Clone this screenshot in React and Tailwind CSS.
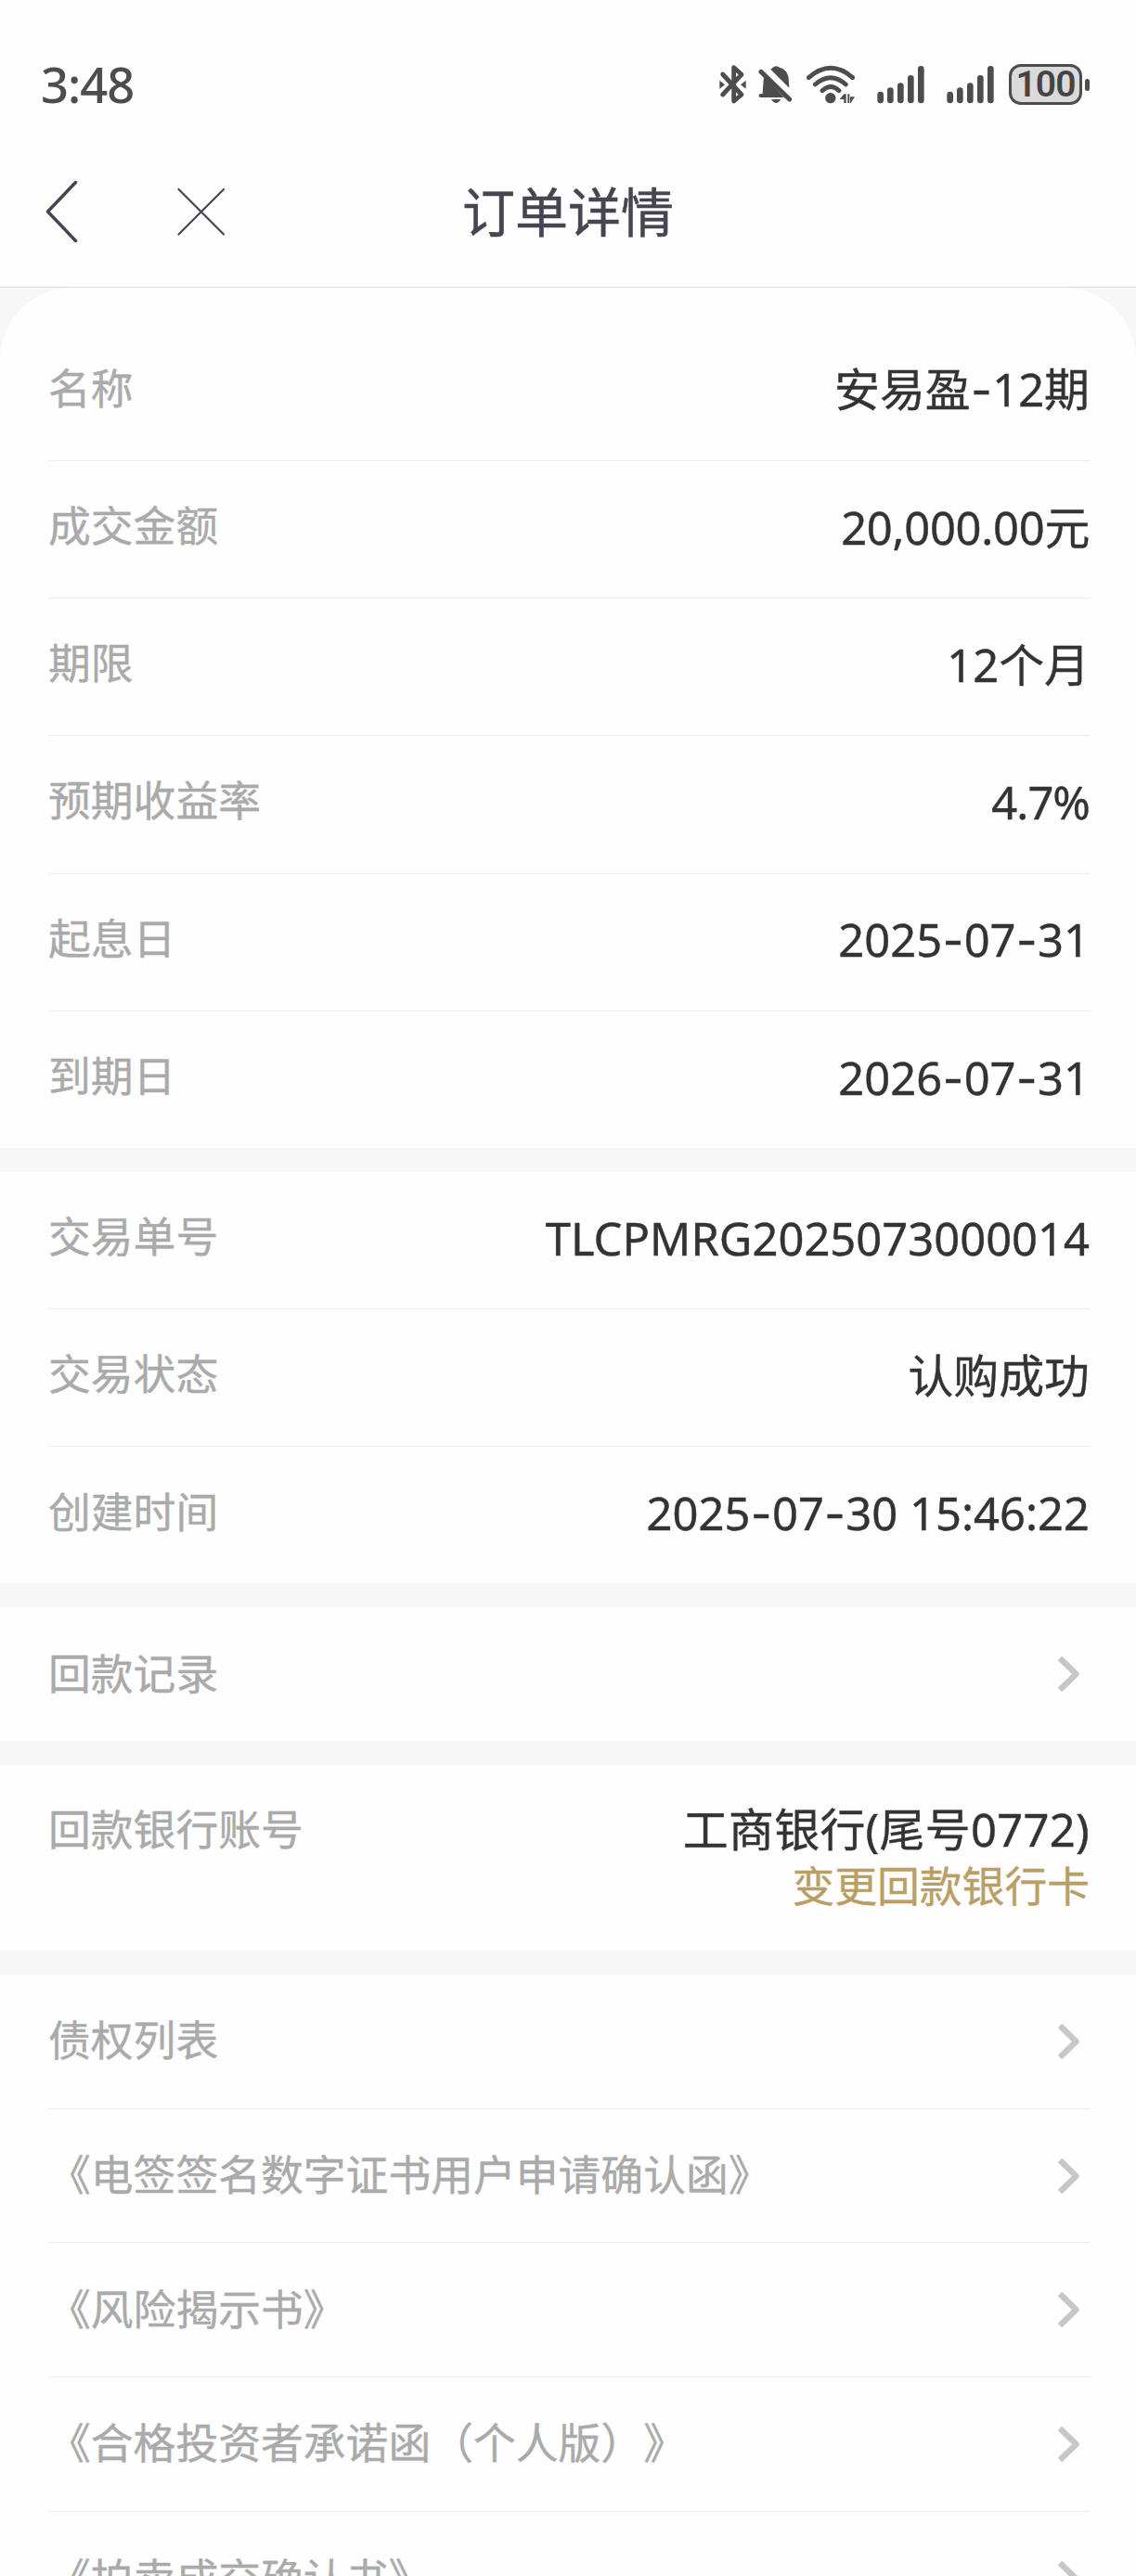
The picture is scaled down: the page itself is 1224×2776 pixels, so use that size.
import React from 'react';

const orderInfo = [
    { label: '名称', value: '安易盈-12期' },
    { label: '成交金额', value: '20,000.00元', tracking: 'tracking-[-0.3px]' },
    { label: '期限', value: '12个月' },
    { label: '预期收益率', value: '4.7%', tracking: 'tracking-[-1px]' },
    { label: '起息日', value: '2025-07-31' },
    { label: '到期日', value: '2026-07-31' },
];

const tradeInfo = [
    { label: '交易单号', value: 'TLCPMRG2025073000014' },
    { label: '交易状态', value: '认购成功' },
    { label: '创建时间', value: '2025-07-30 15:46:22' },
];

const documents = [
    '债权列表',
    '《电签签名数字证书用户申请确认函》',
    '《风险揭示书》',
    '《合格投资者承诺函（个人版）》',
    '《拍卖成交确认书》',
];

const SignalIcon = () => (
    <svg viewBox="0 57 153 132" className="h-11 w-[51px]" stroke="#4d4d4d" strokeWidth="20" strokeLinecap="round">
        <path d="M11 156v18M43 143v31M76 128v46M109 103v71M142 73v101" />
    </svg>
);

const StatusBar = () => (
    <div className="flex h-[140px] items-start justify-between pt-[70px] pr-[50px] pl-[44px] text-[#4d4d4d]">
        <span className="text-[52.500px] leading-[42px] font-medium tracking-[-1px]">3:48</span>
        <div className="-mt-px flex items-center">
            {/* bluetooth */}
            <svg viewBox="104 57 87 132" className="h-11 w-[29px]" fill="none" stroke="#4d4d4d" strokeWidth="14.500" strokeLinecap="round" strokeLinejoin="round">
                <path d="M115 90l61 66-25 21V68l25 23-61 65" />
                <path d="M105 110v27l17-13.500zM190 110v27l-17-13.500z" fill="#4d4d4d" stroke="none" />
            </svg>
            {/* muted bell */}
            <svg viewBox="230 57 111 132" className="ml-[13px] h-11 w-[37px]" fill="#4d4d4d">
                <path d="M248 95l65 70H237q-6-1-5-8 1-4 12-4zM270 74l7-6q11-9 22 0c20 6 28 20 29 36l2 30zM272 171h31q-15 24-31 0z" />
                <path d="M239 82l92 89" stroke="#4d4d4d" strokeWidth="15" strokeLinecap="round" />
            </svg>
            {/* wifi */}
            <svg viewBox="387 57 156 132" className="ml-[15px] h-11 w-[52px]" fill="none" stroke="#4d4d4d" strokeWidth="14.500" strokeLinecap="round">
                <path d="M394 101q71-62 142 0M415 123q50-44 99 0M438 143q27-25 54 0" />
                <circle cx="464.500" cy="167" r="17" fill="#4d4d4d" stroke="none" />
                <path d="M494 171l14-17v17zM508 154h7v29h-7zM520 154h6v29h-6zM528 163h15l-13 20h-2z" fill="#4d4d4d" stroke="none" />
            </svg>
            <div className="ml-6 flex gap-6">
                <SignalIcon />
                <SignalIcon />
            </div>
            {/* battery */}
            <div className="ml-4 flex items-center gap-[3px]">
                <div className="flex h-11 w-[79px] items-center justify-center rounded-[13px] border-[3px] border-[#4d4d4d] bg-[#dadada] pt-px font-['Roboto'] text-[39px] leading-none font-semibold tracking-[-1px] text-[#444]">
                    100
                </div>
                <div className="h-[13px] w-[5px] rounded-full bg-[#4d4d4d]"></div>
            </div>
        </div>
    </div>
);

const NavBar = () => (
    <div className="relative flex h-[170px] items-center justify-center border-b border-[#dedede] pt-[7px] text-[#464552]">
        <div className="absolute top-[54px] left-[48px] flex items-center gap-[106px]">
            <svg viewBox="0 0 36 68" className="h-[68px] w-9" fill="none" stroke="currentColor" strokeWidth="3.500" strokeLinecap="round" strokeLinejoin="round">
                <path d="M33.500 2.500L3.500 34l30 31.500" />
            </svg>
            <svg viewBox="0 0 54 54" className="h-[54px] w-[54px]" fill="none" stroke="currentColor" strokeWidth="2.200" strokeLinecap="round">
                <path d="M2.500 3l48.500 48.500M51 3L2.500 51.500" />
            </svg>
        </div>
        <h1 className="text-[57px] leading-none [-webkit-text-stroke:0.5px]">订单详情</h1>
    </div>
);

const Chevron = () => (
    <svg viewBox="0 0 24 38" className="mr-[10px] h-[38px] w-6 shrink-0" fill="none" stroke="#c7c7c7" strokeWidth="6.500" strokeLinejoin="round">
        <path d="M2 2l17.500 17L2 36" />
    </svg>
);

const Label = ({ children }) => (
    <span className="pb-[3px] text-[45.800px] leading-[60px] text-[#aaa] [-webkit-text-stroke:0.4px] [text-spacing-trim:space-all]">{children}</span>
);

// The hyphen is set in a wider face than the digits around it
const Value = ({ text, tracking = '' }) => (
    <span className={`text-[48.900px] leading-[60px] text-[#333] [-webkit-text-stroke:0.4px] ${tracking}`}>
        {text.split('-').map((part, i) => (
            <React.Fragment key={i}>
                {i > 0 && <span className="px-[0.500px] font-['Inter'] leading-none">-</span>}
                {part}
            </React.Fragment>
        ))}
    </span>
);

const InfoRow = ({ label, value, tracking }) => (
    <div className="flex h-[148.2px] items-center justify-between border-b border-[#ebebeb] pb-[6px] last:border-b-0">
        <Label>{label}</Label>
        <Value text={value} tracking={tracking} />
    </div>
);

const LinkRow = ({ label }) => (
    <div className="flex h-[144.7px] items-center justify-between border-b border-[#ebebeb] last:border-b-0">
        <Label>{label}</Label>
        <Chevron />
    </div>
);

export default function App() {
    return (
        <div className="h-[2776px] w-[1224px] overflow-hidden bg-[#f7f7f7] font-['Noto_Sans','Noto_Sans_CJK_SC',sans-serif]">
            <header className="bg-[#fefefe]">
                <StatusBar />
                <NavBar />
            </header>

            <main className="flex flex-col gap-[26px]">
                <section className="h-[927px] overflow-hidden rounded-t-[78px] bg-[#fefefe] pt-[38.8px] pr-[50px] pl-[52px]">
                    {orderInfo.map((row) => (
                        <InfoRow key={row.label} {...row} />
                    ))}
                </section>

                <section className="h-[443px] overflow-hidden bg-[#fefefe] pr-[50px] pl-[52px]">
                    {tradeInfo.map((row) => (
                        <InfoRow key={row.label} {...row} />
                    ))}
                </section>

                <section className="h-[144px] bg-[#fefefe] pr-[50px] pl-[52px]">
                    <LinkRow label="回款记录" />
                </section>

                <section className="flex h-[200px] items-start justify-between bg-[#fefefe] pt-[39px] pr-[50px] pl-[52px]">
                    <Label>回款银行账号</Label>
                    <div className="flex flex-col items-end">
                        <Value text="工商银行(尾号0772)" tracking="tracking-[0.3px]" />
                        <span className="text-[45.800px] leading-[62px] text-[#b99f66] [-webkit-text-stroke:0.4px]">变更回款银行卡</span>
                    </div>
                </section>

                <section className="h-[648px] overflow-hidden bg-[#fefefe] pr-[50px] pl-[52px]">
                    {documents.map((name) => (
                        <LinkRow key={name} label={name} />
                    ))}
                </section>
            </main>
        </div>
    );
}
